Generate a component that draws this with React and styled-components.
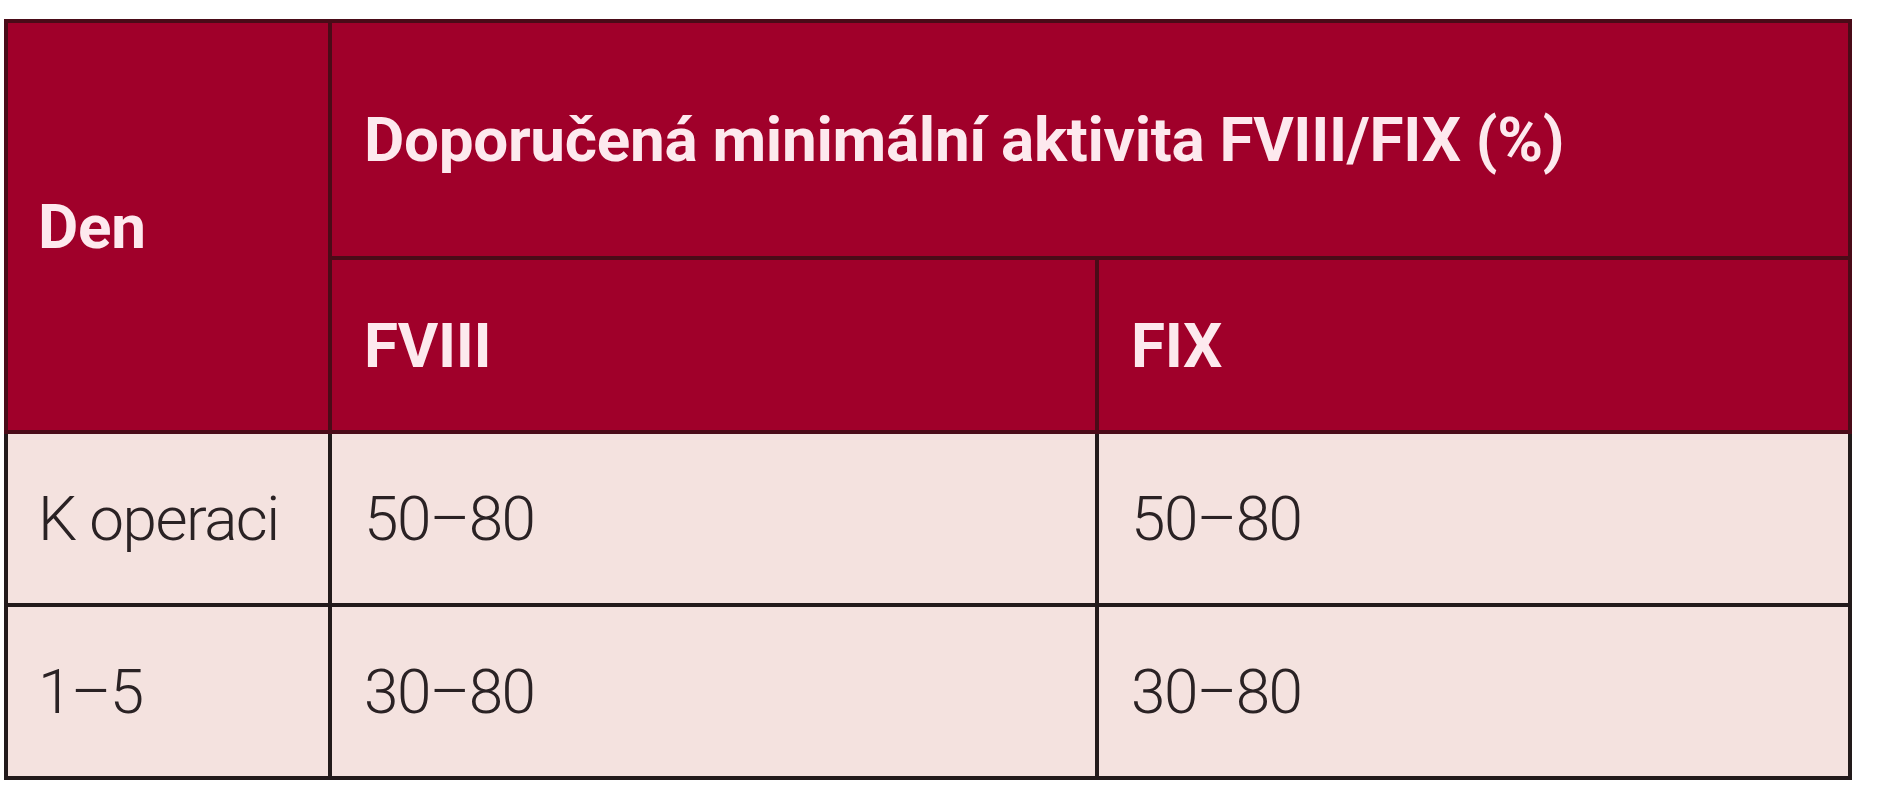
import React from "react";
import styled, { createGlobalStyle } from "styled-components";

const GlobalStyle = createGlobalStyle`
  html, body {
    margin: 0;
    padding: 0;
    background: #ffffff;
  }
  body {
    font-family: Roboto, "Liberation Sans", Arial, sans-serif;
  }
`;

const HEAD_LINE = "#4a0b18";
const BODY_LINE = "#221a1b";

const Page = styled.div`
  padding: 19px 0 0 4px;
`;

const Grid = styled.div`
  display: grid;
  grid-template-columns: 328px 767px 753px;
  grid-template-rows: 241px 174px 173px 173px;
  width: 1848px;
`;

const Cell = styled.div`
  box-sizing: border-box;
  display: flex;
  align-items: center;
  padding-left: ${({ $first }) => ($first ? "30px" : "32px")};
  border-right: 4px solid ${({ $head }) => ($head ? HEAD_LINE : BODY_LINE)};
  border-bottom: 4px solid ${({ $head }) => ($head ? HEAD_LINE : BODY_LINE)};
  border-left: ${({ $first, $head }) =>
    $first ? `4px solid ${$head ? HEAD_LINE : BODY_LINE}` : "none"};
  border-top: ${({ $top }) => ($top ? `4px solid ${HEAD_LINE}` : "none")};
  grid-column: ${({ $col }) => $col || "auto"};
  grid-row: ${({ $row }) => $row || "auto"};
`;

const HeadCell = styled(Cell)`
  background: #a0002a;
  color: #fde9ee;
  font-weight: 700;
  font-size: 62px;
  letter-spacing: -0.3px;
`;

const BodyCell = styled(Cell)`
  background: #f4e2df;
  color: #2a2224;
  font-weight: 300;
  font-size: 62px;
  letter-spacing: -1.5px;
`;

const rows = [
  { day: "K operaci", f8: "50–80", f9: "50–80" },
  { day: "1–5", f8: "30–80", f9: "30–80" },
];

export default function App() {
  return (
    <>
      <GlobalStyle />
      <Page>
        <Grid>
          <HeadCell $head $first $top $col="1" $row="1 / span 2">
            Den
          </HeadCell>
          <HeadCell $head $top $col="2 / span 2" $row="1">
            Doporučená minimální aktivita FVIII/FIX (%)
          </HeadCell>
          <HeadCell $head $col="2" $row="2">
            FVIII
          </HeadCell>
          <HeadCell $head $col="3" $row="2">
            FIX
          </HeadCell>
          {rows.map((r) => (
            <React.Fragment key={r.day}>
              <BodyCell $first>{r.day}</BodyCell>
              <BodyCell>{r.f8}</BodyCell>
              <BodyCell>{r.f9}</BodyCell>
            </React.Fragment>
          ))}
        </Grid>
      </Page>
    </>
  );
}
